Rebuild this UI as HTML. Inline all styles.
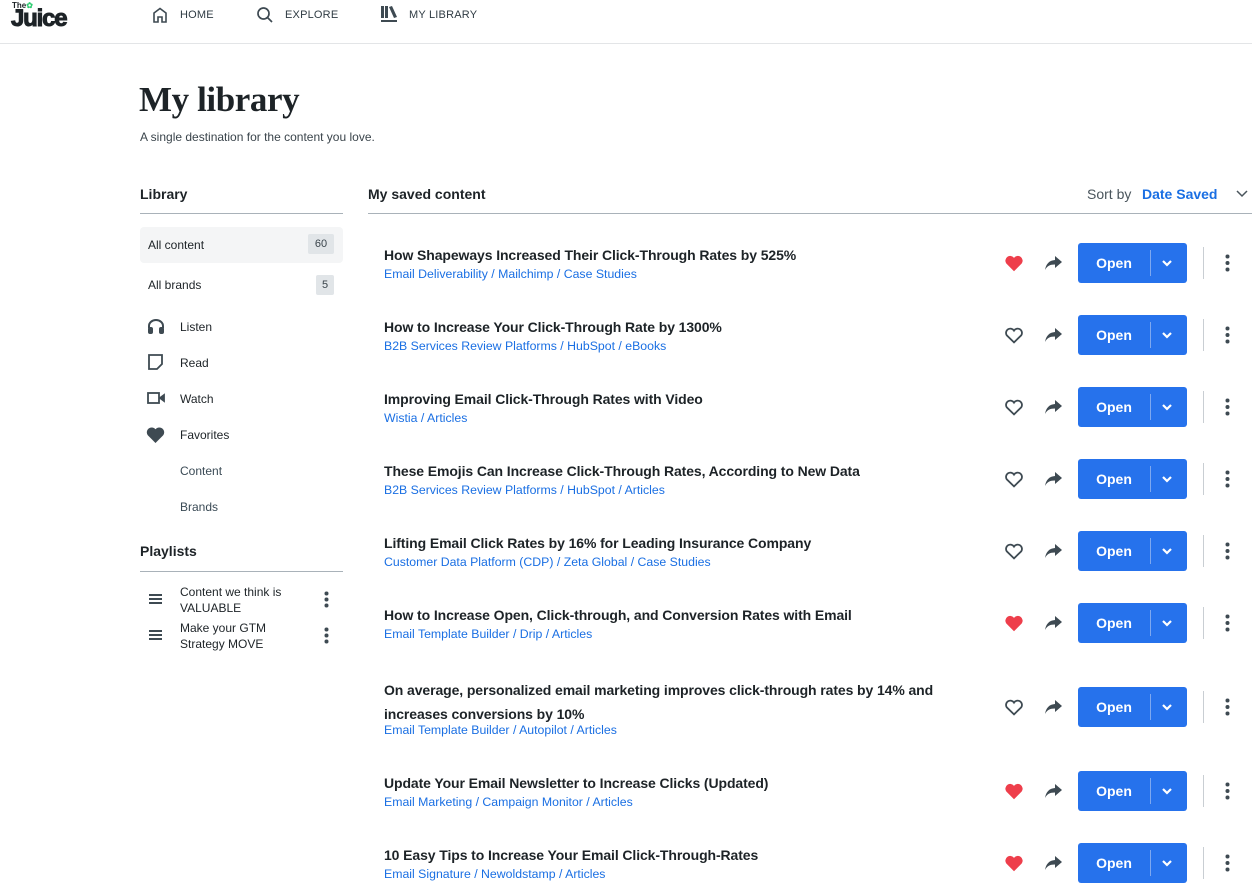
<!DOCTYPE html>
<html><head><meta charset="utf-8"><style>
*{margin:0;padding:0;box-sizing:border-box}
body{width:1252px;height:896px;overflow:hidden;background:#fff;font-family:"Liberation Sans",sans-serif;color:#1d2327;position:relative}
.a{position:absolute}
.nav{font-size:11px;color:#2f3b43;letter-spacing:.2px}
.side{font-size:12px;color:#1d2327}
.t{font-size:14px;font-weight:bold;color:#1d2327;left:384px;white-space:nowrap;letter-spacing:-.1px}
.c{font-size:12.3px;color:#1a6fe3;left:384px;white-space:nowrap}
.btn{left:1078px;width:109px;height:40px;background:#2672ec;border-radius:3px;color:#fff;font-weight:bold;font-size:14px}
.btn span{position:absolute;left:0;width:72px;top:12px;text-align:center}
.btn i{position:absolute;left:72px;top:7px;width:1px;height:26px;background:#7ea8f0}
.btn svg{position:absolute;left:83px;top:16px}
.vl{left:1203px;width:1px;height:32px;background:#c9ced3}
</style></head><body>
<div class="a" style="left:12px;top:1px;font-size:8px;font-weight:bold">The<span style="color:#2ecc71">✿</span></div>
<div class="a" style="left:11px;top:5px;font-size:24px;font-weight:900;letter-spacing:-1.2px;color:#1d2327;-webkit-text-stroke:1px #1d2327">Juice</div>
<svg class="a" style="left:152px;top:7px" width="16" height="16" viewBox="0 0 16 16" fill="none" stroke="#3e4a52" stroke-width="1.6"><path d="M2 15V6l6-4.5L14 6v9h-4v-5H6v5z"/></svg>
<div class="a nav" style="left:180px;top:9px">HOME</div>
<svg class="a" style="left:256px;top:6px" width="18" height="18" viewBox="0 0 18 18" fill="none" stroke="#3e4a52" stroke-width="1.7"><circle cx="7.5" cy="7.5" r="5.5"/><path d="M11.5 11.5l4.5 4.5"/></svg>
<div class="a nav" style="left:285px;top:9px">EXPLORE</div>
<svg class="a" style="left:381px;top:6px" width="17" height="17" viewBox="0 0 17 17" fill="#3e4a52"><rect x="0" y="0" width="3" height="12"/><rect x="4" y="0" width="3" height="12"/><path d="M8 1l3-1 5 11-3 1z"/><rect x="0" y="14" width="16" height="2"/></svg>
<div class="a nav" style="left:409px;top:9px">MY LIBRARY</div>
<div class="a" style="left:0;top:43px;width:1252px;height:1px;background:#e3e5e7"></div>

<div class="a" style="left:139px;top:80px;font-family:'Liberation Serif',serif;font-weight:bold;font-size:35px;letter-spacing:-.4px">My library</div>
<div class="a" style="left:140px;top:130px;font-size:12px;color:#3a444b">A single destination for the content you love.</div>

<div class="a" style="left:140px;top:186px;font-size:14px;font-weight:bold">Library</div>
<div class="a" style="left:140px;top:213px;width:203px;height:1px;background:#a9b2b9"></div>
<div class="a" style="left:140px;top:227px;width:203px;height:36px;background:#f4f5f6;border-radius:4px"></div>
<div class="a side" style="left:148px;top:238px">All content</div>
<div class="a" style="left:308px;top:234px;width:26px;height:20px;background:#e1e5e8;border-radius:2px;font-size:11px;text-align:center;line-height:20px;color:#3a444b">60</div>
<div class="a side" style="left:148px;top:278px">All brands</div>
<div class="a" style="left:316px;top:275px;width:18px;height:20px;background:#e1e5e8;border-radius:2px;font-size:11px;text-align:center;line-height:20px;color:#3a444b">5</div>
<svg class="a" style="left:147px;top:318px" width="18" height="16" viewBox="0 0 18 16" fill="#3e4a52"><path d="M1 10V8a8 7 0 0116 0v2h-2V8a6 5 0 00-12 0v2z"/><rect x="1" y="9" width="5" height="7" rx="2"/><rect x="12" y="9" width="5" height="7" rx="2"/></svg>
<div class="a side" style="left:180px;top:320px">Listen</div>
<svg class="a" style="left:148px;top:354px" width="15" height="16" viewBox="0 0 15 16" fill="none" stroke="#3e4a52" stroke-width="1.8"><path d="M1 1h13v9l-5 5H1z"/></svg>
<div class="a side" style="left:180px;top:356px">Read</div>
<svg class="a" style="left:147px;top:392px" width="18" height="12" viewBox="0 0 18 12" fill="none" stroke="#3e4a52" stroke-width="1.8"><rect x="1" y="1" width="11" height="10"/><path d="M13 6l4-3v6z" fill="#3e4a52"/></svg>
<div class="a side" style="left:180px;top:392px">Watch</div>
<svg class="a" style="left:146px;top:427px" width="19" height="16" viewBox="0 0 24 21" fill="#3e4a52"><path d="M12 21L2 11A6 6 0 0112 3a6 6 0 0110 8z"/></svg>
<div class="a side" style="left:180px;top:428px">Favorites</div>
<div class="a side" style="left:180px;top:464px;color:#3a4a55">Content</div>
<div class="a side" style="left:180px;top:500px;color:#3a4a55">Brands</div>
<div class="a" style="left:140px;top:543px;font-size:14px;font-weight:bold">Playlists</div>
<div class="a" style="left:140px;top:571px;width:203px;height:1px;background:#a9b2b9"></div>
<svg class="a" style="left:149px;top:594px" width="13" height="11" fill="#3e4a52"><rect y="0" width="13" height="2"/><rect y="4" width="13" height="2"/><rect y="8" width="13" height="2"/></svg>
<div class="a side" style="left:180px;top:584px;line-height:16px">Content we think is<br>VALUABLE</div>
<svg class="a" style="left:324px;top:591px" width="5" height="17" fill="#3e4a52"><circle cx="2.5" cy="2.5" r="2"/><circle cx="2.5" cy="8.5" r="2"/><circle cx="2.5" cy="14.5" r="2"/></svg>
<svg class="a" style="left:149px;top:630px" width="13" height="11" fill="#3e4a52"><rect y="0" width="13" height="2"/><rect y="4" width="13" height="2"/><rect y="8" width="13" height="2"/></svg>
<div class="a side" style="left:180px;top:620px;line-height:16px">Make your GTM<br>Strategy MOVE</div>
<svg class="a" style="left:324px;top:627px" width="5" height="17" fill="#3e4a52"><circle cx="2.5" cy="2.5" r="2"/><circle cx="2.5" cy="8.5" r="2"/><circle cx="2.5" cy="14.5" r="2"/></svg>

<div class="a" style="left:368px;top:186px;font-size:14px;font-weight:bold">My saved content</div>
<div class="a" style="left:1087px;top:186px;font-size:14px;color:#4a555c">Sort by</div>
<div class="a" style="left:1142px;top:186px;font-size:14px;font-weight:bold;color:#1a6fe3">Date Saved</div>
<svg class="a" style="left:1236px;top:190px" width="12" height="8" fill="none" stroke="#4a555c" stroke-width="1.5"><path d="M1 1l5 5 5-5"/></svg>
<div class="a" style="left:368px;top:213px;width:884px;height:1px;background:#a9b2b9"></div>

<div id="rows"></div>
<script>
var R=[
["How Shapeways Increased Their Click-Through Rates by 525%","Email Deliverability / Mailchimp / Case Studies",1,263],
["How to Increase Your Click-Through Rate by 1300%","B2B Services Review Platforms / HubSpot / eBooks",0,335],
["Improving Email Click-Through Rates with Video","Wistia / Articles",0,407],
["These Emojis Can Increase Click-Through Rates, According to New Data","B2B Services Review Platforms / HubSpot / Articles",0,479],
["Lifting Email Click Rates by 16% for Leading Insurance Company","Customer Data Platform (CDP) / Zeta Global / Case Studies",0,551],
["How to Increase Open, Click-through, and Conversion Rates with Email","Email Template Builder / Drip / Articles",1,623],
["On average, personalized email marketing improves click-through rates by 14% and<br>increases conversions by 10%","Email Template Builder / Autopilot / Articles",0,707],
["Update Your Email Newsletter to Increase Clicks (Updated)","Email Marketing / Campaign Monitor / Articles",1,791],
["10 Easy Tips to Increase Your Email Click-Through-Rates","Email Signature / Newoldstamp / Articles",1,863]];
var h="";
R.forEach(function(r){var y=r[3],two=r[0].indexOf("<br>")>0;
var ty=two?y-29:y-17,cy=two?y+16:y+4;
h+='<div class="a t" style="top:'+ty+'px;line-height:'+(two?24:18)+'px">'+r[0]+'</div>';
h+='<div class="a c" style="top:'+cy+'px">'+r[1]+'</div>';
h+='<svg class="a" style="left:1004px;top:'+(y-8)+'px" width="20" height="17" viewBox="0 0 24 21">'+(r[2]?'<path d="M12 20L2.5 10.5A5.7 5.7 0 0112 3.5a5.7 5.7 0 019.5 7z" fill="#ee3e4b"/>':'<path d="M12 19L3 10.2A5 5 0 0112 4.5a5 5 0 019 5.7z" fill="none" stroke="#3e4a52" stroke-width="2.2"/>')+'</svg>';
h+='<svg class="a" style="left:1045px;top:'+(y-7)+'px" width="17" height="14" viewBox="0 0 17 14" fill="#3e4a52"><path d="M10 0l7 6-7 6V8.5C5 8.5 2 10 0 14 1 8 4 4.5 10 4z"/></svg>';
h+='<div class="a btn" style="top:'+(y-20)+'px"><span>Open</span><i></i><svg width="12" height="10" fill="none" stroke="#fff" stroke-width="2.2"><path d="M2 2l4 4 4-4"/></svg></div>';
h+='<div class="a vl" style="top:'+(y-16)+'px"></div>';
h+='<svg class="a" style="left:1225px;top:'+(y-9)+'px" width="5" height="18" fill="#3e4a52"><circle cx="2.5" cy="2.5" r="2"/><circle cx="2.5" cy="9" r="2"/><circle cx="2.5" cy="15.5" r="2"/></svg>';
});
document.getElementById("rows").innerHTML=h;
</script>
</body></html>
